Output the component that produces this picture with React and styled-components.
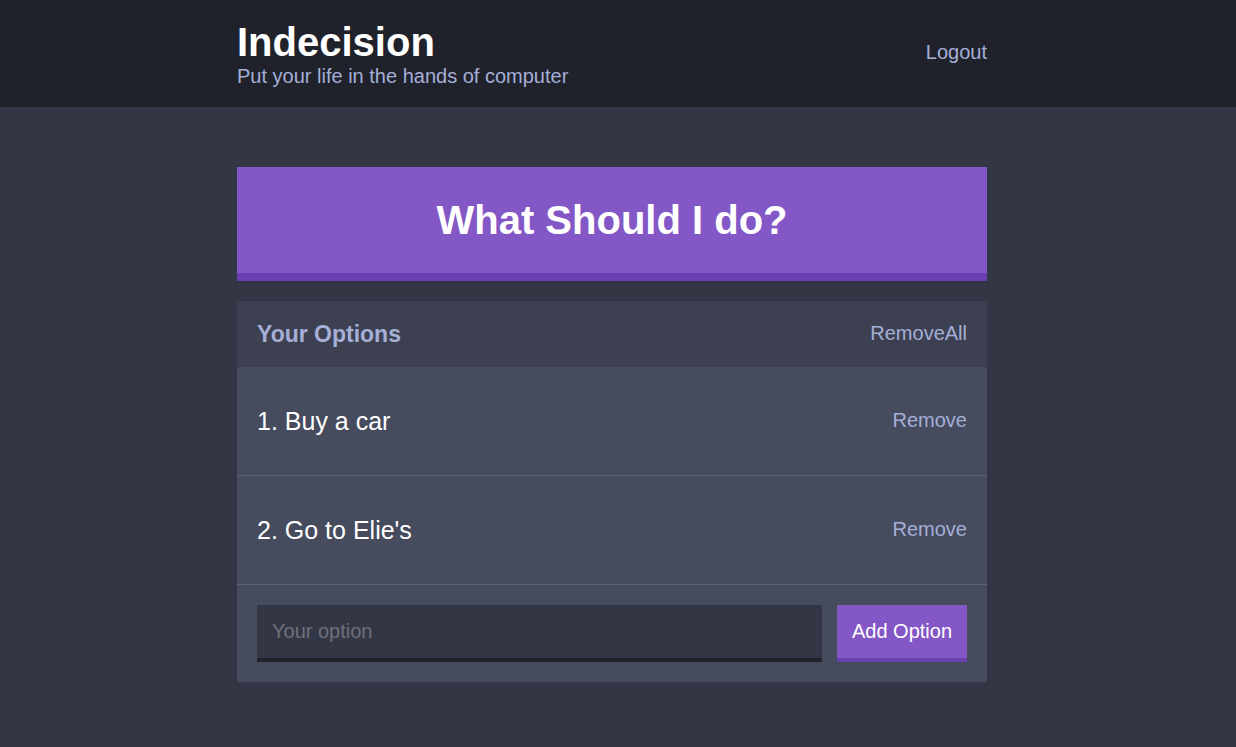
import React, { useState } from "react";
import styled, { createGlobalStyle } from "styled-components";

const GlobalStyle = createGlobalStyle`
  html, body {
    margin: 0;
    padding: 0;
    background: #333745;
    font-family: "Liberation Sans", Arial, Helvetica, sans-serif;
  }
  * {
    box-sizing: border-box;
  }
`;

const Page = styled.div`
  min-height: 100vh;
  background: #333745;
  padding-right: 12px;
`;

const HeaderBar = styled.header`
  background: #20222b;
  padding: 19px 0;
  margin-right: -12px;
  padding-right: 12px;
`;

const Container = styled.div`
  max-width: 750px;
  margin: 0 auto;
`;

const HeaderRow = styled(Container)`
  display: flex;
  justify-content: space-between;
  align-items: center;
`;

const Title = styled.h1`
  margin: 0;
  color: #ffffff;
  font-size: 40px;
  font-weight: bold;
  line-height: 46px;
`;

const Subtitle = styled.h2`
  margin: 0;
  color: #a5afd7;
  font-size: 20px;
  font-weight: normal;
  line-height: 23px;
`;

const LinkButton = styled.button`
  background: none;
  border: none;
  padding: 0 0 2px;
  color: #a5afd7;
  font-family: inherit;
  font-size: 20px;
  line-height: 23px;
  white-space: nowrap;
  cursor: pointer;
`;

const Main = styled(Container)`
  padding-top: 60px;
`;

const BigButton = styled.button`
  display: block;
  width: 100%;
  background: #8357c5;
  border: none;
  border-bottom: 8px solid #6a3fb0;
  color: #ffffff;
  font-family: inherit;
  font-size: 40px;
  font-weight: bold;
  line-height: 46px;
  padding: 30px;
  margin: 0 0 20px;
  cursor: pointer;
`;

const Widget = styled.section`
  background: #464b5e;
  margin-bottom: 48px;
`;

const WidgetHeader = styled.div`
  background: #3c4050;
  display: flex;
  justify-content: space-between;
  align-items: center;
  padding: 20px;
  height: 66px;
`;

const WidgetTitle = styled.h3`
  margin: 0;
  color: #a5afd7;
  font-size: 23px;
  font-weight: bold;
`;

const OptionRow = styled.div`
  display: flex;
  justify-content: space-between;
  align-items: center;
  height: 109px;
  padding: 0 20px;
  border-bottom: 1px solid #5d6277;
`;

const OptionText = styled.p`
  margin: 0;
  color: #ffffff;
  font-size: 25px;
  line-height: 29px;
`;

const AddForm = styled.form`
  display: flex;
  align-items: stretch;
  padding: 20px;
`;

const Input = styled.input`
  flex: 1;
  min-width: 0;
  height: 57px;
  margin-right: 15px;
  background: #333745;
  border: none;
  border-bottom: 4px solid #20222b;
  color: #a5afd7;
  font-family: inherit;
  font-size: 20px;
  padding: 0 15px;
  outline: none;
  &::placeholder {
    color: #6f7079;
  }
`;

const AddButton = styled.button`
  flex: 0 0 130px;
  height: 57px;
  background: #8357c5;
  border: none;
  border-bottom: 4px solid #6a3fb0;
  color: #ffffff;
  font-family: inherit;
  font-size: 20px;
  white-space: nowrap;
  padding: 0;
  cursor: pointer;
`;

export default function App() {
  const [options, setOptions] = useState(["Buy a car", "Go to Elie's"]);
  const [value, setValue] = useState("");

  const handleAdd = (e) => {
    e.preventDefault();
    const text = value.trim();
    if (!text) return;
    setOptions([...options, text]);
    setValue("");
  };

  return (
    <Page>
      <GlobalStyle />
      <HeaderBar>
        <HeaderRow>
          <div>
            <Title>Indecision</Title>
            <Subtitle>Put your life in the hands of computer</Subtitle>
          </div>
          <LinkButton>Logout</LinkButton>
        </HeaderRow>
      </HeaderBar>
      <Main>
        <BigButton>What Should I do?</BigButton>
        <Widget>
          <WidgetHeader>
            <WidgetTitle>Your Options</WidgetTitle>
            <LinkButton onClick={() => setOptions([])}>RemoveAll</LinkButton>
          </WidgetHeader>
          {options.map((opt, i) => (
            <OptionRow key={i}>
              <OptionText>
                {i + 1}. {opt}
              </OptionText>
              <LinkButton
                onClick={() => setOptions(options.filter((_, j) => j !== i))}
              >
                Remove
              </LinkButton>
            </OptionRow>
          ))}
          <AddForm onSubmit={handleAdd}>
            <Input
              placeholder="Your option"
              value={value}
              onChange={(e) => setValue(e.target.value)}
            />
            <AddButton type="submit">Add Option</AddButton>
          </AddForm>
        </Widget>
      </Main>
    </Page>
  );
}
